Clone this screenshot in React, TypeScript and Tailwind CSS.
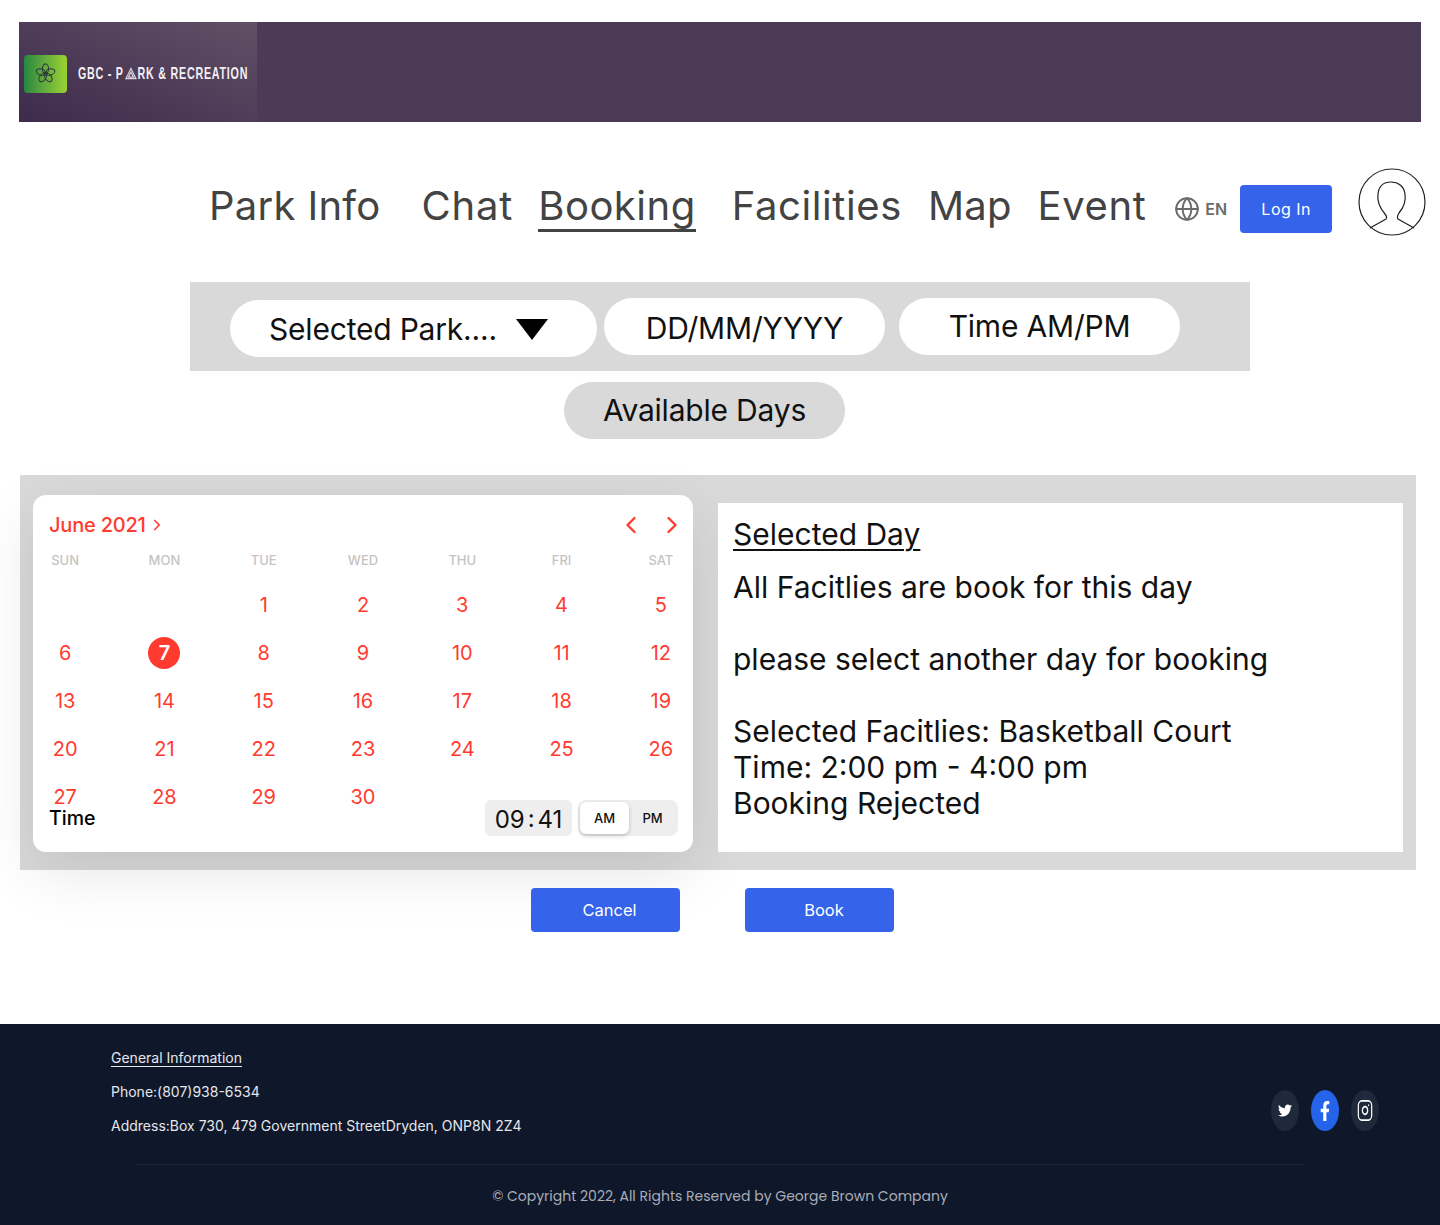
import React from 'react';
import { ChevronLeft, ChevronRight, Globe, Instagram } from 'lucide-react';
import { FaFacebookF, FaTwitter } from 'react-icons/fa';

const WEEK_DAYS = ['SUN', 'MON', 'TUE', 'WED', 'THU', 'FRI', 'SAT'];
const DAYS = ['', '', 1, 2, 3, 4, 5, 6, 7, 8, 9, 10, 11, 12, 13, 14, 15, 16, 17, 18, 19, 20, 21, 22, 23, 24, 25, 26, 27, 28, 29, 30];

const Logo: React.FC = () => (
    <div className="w-[238px] h-full flex items-center pl-[5px] pt-[3px] bg-gradient-to-tr from-[#3e2a4c] to-[#625066]">
        <div className="w-[43px] h-[38px] shrink-0 rounded-[4px] flex items-center justify-center bg-gradient-to-r from-[#23883f] to-[#9ad32f]">
            <svg viewBox="0 0 24 24" className="w-[21px] h-[21px]" fill="none" stroke="#2c3a3a" strokeWidth="1.2">
                <ellipse cx="12" cy="6.5" rx="3.5" ry="5.5" />
                <ellipse cx="12" cy="6.5" rx="3.5" ry="5.5" transform="rotate(72 12 12)" />
                <ellipse cx="12" cy="6.5" rx="3.5" ry="5.5" transform="rotate(144 12 12)" />
                <ellipse cx="12" cy="6.5" rx="3.5" ry="5.5" transform="rotate(216 12 12)" />
                <ellipse cx="12" cy="6.5" rx="3.5" ry="5.5" transform="rotate(288 12 12)" />
                <circle cx="12" cy="12" r="2" />
            </svg>
        </div>
        <div className="ml-[11px] flex items-center whitespace-nowrap text-[17px] font-bold text-[#f2eff2] tracking-[1.2px] font-['Liberation_Sans',sans-serif] origin-left scale-x-[.63]">
            <span>GBC - P</span>
            <svg viewBox="0 0 20 18" preserveAspectRatio="none" className="w-[20px] h-[13px] mx-[1px] shrink-0" fill="none" stroke="#d8d2dc" strokeWidth="1.8">
                <path d="M10 2 L18 16 H2 Z" />
                <path d="M10 7 L14 14 H6 Z" />
            </svg>
            <span>RK &amp; RECREATION</span>
        </div>
    </div>
);

const NavLink: React.FC<{ label: string; className: string; active?: boolean }> = ({ label, className, active }) => (
    <a className={`mt-[10px] text-[40px] leading-[46px] text-[#434343] border-b-[3px] ${active ? 'border-[#434343]' : 'border-transparent'} ${className}`}>
        {label}
    </a>
);

const Calendar: React.FC = () => (
    <div className="w-[660px] h-[357px] mt-[20px] rounded-[13px] bg-white shadow-[0_20px_60px_rgba(0,0,0,0.1)] px-[16px]">
        <div className="h-[58px] flex items-center justify-between pt-[1px]">
            <div className="flex items-center text-[#ff3b30] text-[20px] font-medium tracking-[-0.2px]">
                June 2021
                <ChevronRight className="w-[18px] h-[18px] ml-[2px]" strokeWidth={2.2} />
            </div>
            <div className="flex items-center gap-[13px] text-[#ff3b30] -mr-[9px]">
                <ChevronLeft className="w-[28px] h-[28px]" strokeWidth={2} />
                <ChevronRight className="w-[28px] h-[28px]" strokeWidth={2} />
            </div>
        </div>
        <div className="grid grid-cols-7 w-[695px] -ml-[33.5px] h-[14px] items-center">
            {WEEK_DAYS.map((d) => (
                <div key={d} className="text-center text-[13px] font-medium text-[#c4c4c4] leading-none">{d}</div>
            ))}
        </div>
        <div className="grid grid-cols-7 auto-rows-[48px] mt-[14px] w-[695px] -ml-[33.5px] text-[20px] text-[#ff3b30]">
            {DAYS.map((d, i) => (
                <div key={i} className="flex items-center justify-center">
                    {d === 7 ? (
                        <span className="w-[32px] h-[32px] rounded-full bg-[#ff3b30] text-white font-semibold flex items-center justify-center">7</span>
                    ) : d}
                </div>
            ))}
        </div>
        <div className="-mt-[21px] flex items-center justify-between">
            <span className="text-[19.5px] font-medium text-black leading-none mt-[1px]">Time</span>
            <div className="flex items-center gap-[6px] mr-[-1px]">
                <div className="w-[87px] h-[36px] pt-[3px] rounded-[6px] bg-[#eeeeee] flex items-center justify-center text-[24px] text-[#111]">
                    09<span className="mx-[3px] relative -top-[1px]">:</span>41
                </div>
                <div className="w-[100px] h-[36px] rounded-[8px] bg-[#eeeeee] flex items-center p-[2px] text-[13px] font-medium text-[#111]">
                    <span className="w-[49px] h-[32px] pt-[1px] rounded-[6px] bg-white shadow-[0_2px_4px_rgba(0,0,0,0.2)] flex items-center justify-center">AM</span>
                    <span className="flex-1 pt-[1px] flex items-center justify-center">PM</span>
                </div>
            </div>
        </div>
    </div>
);

const SocialBadge: React.FC<{ className: string; children: React.ReactNode }> = ({ className, children }) => (
    <span className={`w-[28px] h-[41px] rounded-[50%] flex items-center justify-center text-white ${className}`}>{children}</span>
);

const App: React.FC = () => (
    <div className="w-[1440px] h-[1225px] bg-white overflow-hidden flex flex-col font-['Inter',sans-serif]">
        <header className="mt-[22px] ml-[19px] w-[1402px] h-[100px] bg-[#4b3a58]">
            <Logo />
        </header>

        <nav className="mt-[46px] h-[68px] flex items-center pl-[209px]">
            <NavLink label="Park Info" className="tracking-[0.3px]" />
            <NavLink label="Chat" className="ml-[41px] tracking-[0.8px]" />
            <NavLink label="Booking" className="ml-[25px] tracking-[0.5px]" active />
            <NavLink label="Facilities" className="ml-[36px] tracking-[0.6px]" />
            <NavLink label="Map" className="ml-[26px] tracking-[0.2px]" />
            <NavLink label="Event" className="ml-[26px] tracking-[0.6px]" />
            <div className="ml-[28px] mt-[13px] flex items-center text-[#6b6b6b]">
                <Globe className="w-[26px] h-[26px]" strokeWidth={1.8} />
                <span className="ml-[5px] text-[16px] font-semibold">EN</span>
            </div>
            <button className="ml-[13px] mt-[14px] w-[92px] h-[48px] rounded-[4px] bg-[#3563e9] text-white text-[16px] tracking-[0.5px]">Log In</button>
            <svg viewBox="0 0 68 68" className="ml-[26px] w-[68px] h-[68px]" fill="none" stroke="#222" strokeWidth="1.2">
                <circle cx="34" cy="34" r="33" />
                <path d="M12 60 L28 51 Q29.5 49 27 46 C21 39 19 33 20 26 C21 17 27 14 33 14 C40 14 46 18 47 26 C48 33 46 39 41 45 Q38.5 49 40 51 L56 60" />
            </svg>
        </nav>

        <section className="mt-[46px] ml-[190px] w-[1060px] h-[89px] bg-[#d9d9d9] flex items-start pl-[40px] pt-[16px] gap-[7px] text-[30px] text-[#111] tracking-[-0.2px]">
            <div className="w-[367px] h-[57px] mt-[2px] pt-[1px] rounded-full bg-white flex items-center pl-[39px]">
                Selected Park....
                <span className="ml-[19px] w-0 h-0 border-x-[16px] border-x-transparent border-t-[21px] border-t-black" />
            </div>
            <div className="w-[281px] h-[57px] rounded-full bg-white flex items-center justify-center pt-[3px]">DD/MM/YYYY</div>
            <div className="w-[281px] h-[57px] ml-[7px] rounded-full bg-white flex items-center justify-center">Time AM/PM</div>
        </section>

        <div className="mt-[11px] ml-[564px] w-[281px] h-[57px] rounded-full bg-[#d9d9d9] flex items-center justify-center text-[30px] text-[#111] tracking-[-0.2px]">
            Available Days
        </div>

        <section className="mt-[36px] ml-[20px] w-[1396px] h-[395px] bg-[#d9d9d9] flex pl-[13px]">
            <Calendar />
            <div className="ml-[25px] mt-[28px] w-[685px] h-[349px] bg-white pl-[15px] text-[30px] leading-[36px] text-[#111]">
                <div className="mt-[13px] inline-block underline decoration-[2px] underline-offset-[4px]">Selected Day</div>
                <p className="mt-[17px]">All Facitlies are book for this day</p>
                <p className="mt-[36px]">please select another day for booking</p>
                <p className="mt-[36px]">Selected Facitlies: Basketball Court</p>
                <p>Time: 2:00 pm - 4:00 pm</p>
                <p>Booking Rejected</p>
            </div>
        </section>

        <div className="mt-[18px] ml-[531px] flex gap-[65px]">
            <button className="relative w-[149px] h-[44px] rounded-[4px] bg-[#3563e9] text-white text-[16.5px] pl-[8px] pt-[1px]">Cancel</button>
            <button className="w-[149px] h-[44px] rounded-[4px] bg-[#3563e9] text-white text-[16.5px] pl-[9px] pt-[1px]">Book</button>
        </div>

        <footer className="mt-[92px] flex-1 bg-[#0f172a] text-[#e5e7eb] text-[14px]">
            <div className="h-[140px] pl-[111px] pr-[61px] flex items-center justify-between">
                <div className="-mt-[5px] flex flex-col gap-[16px] leading-[18px]">
                    <a className="border-b border-[#e5e7eb] self-start leading-[17px]">General Information</a>
                    <p>Phone:(807)938-6534</p>
                    <p>Address:Box 730, 479 Government StreetDryden, ONP8N 2Z4</p>
                </div>
                <div className="flex gap-[12px] mt-[33px]">
                    <SocialBadge className="bg-[#1e293b]">
                        <FaTwitter className="w-[14px] h-[15px]" preserveAspectRatio="none" />
                    </SocialBadge>
                    <SocialBadge className="bg-[#2563eb]">
                        <FaFacebookF className="w-[10px] h-[20px]" preserveAspectRatio="none" />
                    </SocialBadge>
                    <SocialBadge className="bg-[#1e293b]">
                        <Instagram className="w-[16px] h-[23px]" strokeWidth={1.8} preserveAspectRatio="none" />
                    </SocialBadge>
                </div>
            </div>
            <div className="mx-[136px] border-t border-[#1e293b]" />
            <p className="text-center mt-[21px] font-['Poppins','Inter',sans-serif] text-[14px] text-[#a8adb7]">© Copyright 2022, All Rights Reserved by George Brown Company</p>
        </footer>
    </div>
);

export default App;
